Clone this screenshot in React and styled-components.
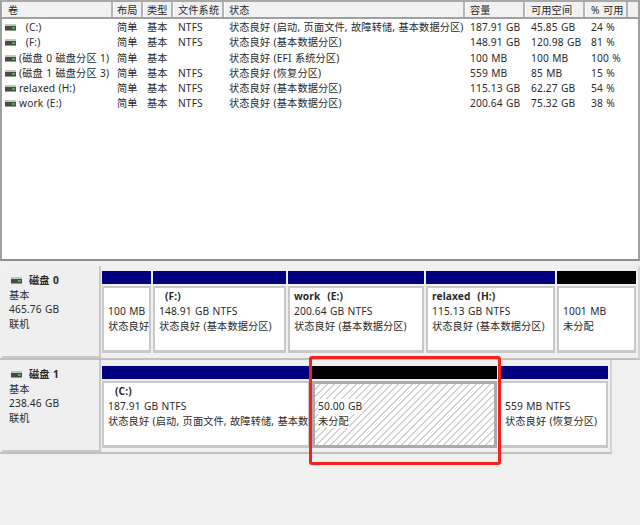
import React from "react";
import styled, { createGlobalStyle } from "styled-components";

const GlobalStyle = createGlobalStyle`
  html, body {
    margin: 0;
    padding: 0;
    background: #f0f0f0;
    overflow: hidden;
  }
  * {
    box-sizing: border-box;
  }
`;

const FONT = `"Noto Sans", "Noto Sans CJK SC", sans-serif`;

const Page = styled.div`
  position: relative;
  width: 640px;
  height: 525px;
  background: #f0f0f0;
  color: #2a2a2a;
  font-family: ${FONT};
  font-size: 10.2px;
  letter-spacing: 0.12px;
  word-spacing: 0.6px;
  overflow: hidden;
`;

const VolumeList = styled.div`
  height: 261px;
  background: #fff;
  border-top: 2px solid #a8a8a8;
  border-left: 2px solid #a0a0a0;
  border-right: 2px solid #a0a0a0;
  border-bottom: 2px solid #8c8c8c;
`;

const HeaderRow = styled.div`
  display: flex;
  height: 17px;
  background: #f1f1f1;
  border-bottom: 2px solid #a0a0a0;
`;

const HeaderCell = styled.div`
  width: ${(p) => p.$w}px;
  flex: none;
  padding-left: ${(p) => p.$pad}px;
  line-height: 16px;
  border-right: 2px solid #b4b4b4;
  border-left: 1px solid #fff;
  white-space: nowrap;
  overflow: hidden;
`;

const Rows = styled.div`
  padding-top: 1px;
`;

const Row = styled.div`
  display: flex;
  height: 15.25px;
  line-height: 15px;
`;

const Cell = styled.div`
  width: ${(p) => p.$w}px;
  flex: none;
  padding-left: ${(p) => p.$pad}px;
  white-space: nowrap;
  overflow: hidden;
`;

const NameCell = styled(Cell)`
  display: flex;
  align-items: center;
  gap: 3px;
`;

const VolumeName = styled.span`
  white-space: pre;
`;

const DiskRow = styled.div`
  display: flex;
  height: 94px;
  width: ${(p) => p.$w}px;
  border-right: 2px solid #d4d4d4;
  border-bottom: 2px solid #c0c0c0;
`;

const DiskInfo = styled.div`
  width: 99px;
  flex: none;
  margin-left: 2px;
  padding: 7px 0 0 7px;
  background: #efefef;
  border-right: 2px solid #c8c8c8;
  border-bottom: 2px solid #c8c8c8;
  line-height: 14.6px;
`;

const DiskTitle = styled.div`
  display: flex;
  align-items: center;
  gap: 7px;
  padding-left: 2px;
  font-weight: 700;
`;

const Partitions = styled.div`
  display: flex;
  gap: 2px;
  padding: ${(p) => p.$top}px 0 0 1px;
`;

const Partition = styled.div`
  display: flex;
  flex-direction: column;
  width: ${(p) => p.$w}px;
  flex: none;
  height: 82px;
`;

const PartitionBar = styled.div`
  height: 13px;
  flex: none;
  background: ${(p) => (p.$free ? "#000" : "#000080")};
`;

const PartitionBody = styled.div`
  flex: 1;
  margin-top: 2px;
  padding: 1px 0 0 4px;
  border: 2px solid #c8c8c8;
  border-bottom-width: 3px;
  background: #fff;
  line-height: 14.7px;
  white-space: nowrap;
  overflow: hidden;
`;

const HatchedBody = styled(PartitionBody)`
  border-color: #ababab;
  border-width: 3px;
  padding: 0 0 0 3px;
  background: repeating-linear-gradient(
    -45deg,
    #d2d2d2 0,
    #d2d2d2 1.4px,
    #fff 1.4px,
    #fff 5px
  );
`;

const PartitionName = styled.div`
  font-weight: 700;
  height: 15px;
  white-space: pre;
  padding-left: ${(p) => p.$indent || 0}px;
`;

const TextLine = styled.div`
  width: fit-content;
  background: ${(p) => (p.$plate ? "#fff" : "transparent")};
`;

const RedFrame = styled.div`
  position: absolute;
  left: 309px;
  top: 356px;
  width: 192px;
  height: 109px;
  border: 3px solid #f4211d;
  border-radius: 3px;
`;

const DiskArea = styled.div`
  padding-top: 5px;
`;

function DriveIcon() {
  return (
    <svg width="11" height="7" viewBox="0 0 11 7" style={{ flex: "none" }}>
      <rect x="0" y="0" width="11" height="2" fill="#c4c4c4" />
      <rect x="0" y="2" width="11" height="4" fill="#4a4a4a" />
      <rect x="7" y="3" width="3" height="2" fill="#3fb54a" />
      <rect x="0" y="6" width="11" height="1" fill="#9a9a9a" />
    </svg>
  );
}

// head = header text inset, pad = row text inset
const columns = [
  { title: "卷", w: 111, head: 5, pad: 3 },
  { title: "布局", w: 30, head: 3, pad: 4 },
  { title: "类型", w: 30, head: 3, pad: 4 },
  { title: "文件系统", w: 51, head: 4, pad: 5 },
  { title: "状态", w: 241, head: 4, pad: 5 },
  { title: "容量", w: 60, head: 4, pad: 5 },
  { title: "可用空间", w: 60, head: 5, pad: 6 },
  { title: "% 可用", w: 43, head: 5, pad: 6 },
];

const volumes = [
  ["  (C:)", "简单", "基本", "NTFS", "状态良好 (启动, 页面文件, 故障转储, 基本数据分区)", "187.91 GB", "45.85 GB", "24 %"],
  ["  (F:)", "简单", "基本", "NTFS", "状态良好 (基本数据分区)", "148.91 GB", "120.98 GB", "81 %"],
  ["(磁盘 0 磁盘分区 1)", "简单", "基本", "", "状态良好 (EFI 系统分区)", "100 MB", "100 MB", "100 %"],
  ["(磁盘 1 磁盘分区 3)", "简单", "基本", "NTFS", "状态良好 (恢复分区)", "559 MB", "85 MB", "15 %"],
  ["relaxed (H:)", "简单", "基本", "NTFS", "状态良好 (基本数据分区)", "115.13 GB", "62.27 GB", "54 %"],
  ["work (E:)", "简单", "基本", "NTFS", "状态良好 (基本数据分区)", "200.64 GB", "75.32 GB", "38 %"],
];

const disks = [
  {
    name: "磁盘 0",
    size: "465.76 GB",
    w: 640,
    top: 5,
    parts: [
      { w: 49, lines: ["100 MB", "状态良好"], blank: true },
      { w: 133, name: "(F:)", indent: 6, lines: ["148.91 GB NTFS", "状态良好 (基本数据分区)"] },
      { w: 136, name: "work  (E:)", lines: ["200.64 GB NTFS", "状态良好 (基本数据分区)"] },
      { w: 129, name: "relaxed  (H:)", lines: ["115.13 GB NTFS", "状态良好 (基本数据分区)"] },
      { w: 79, free: true, lines: ["1001 MB", "未分配"], blank: true },
    ],
  },
  {
    name: "磁盘 1",
    size: "238.46 GB",
    w: 612,
    top: 6,
    parts: [
      { w: 208, name: "(C:)", indent: 7, lines: ["187.91 GB NTFS", "状态良好 (启动, 页面文件, 故障转储, 基本数"] },
      { w: 185, free: true, hatched: true, lines: ["50.00 GB", "未分配"], blank: true },
      { w: 109, lines: ["559 MB NTFS", "状态良好 (恢复分区)"], blank: true },
    ],
  },
];

function PartitionBlock({ part }) {
  const Body = part.hatched ? HatchedBody : PartitionBody;
  return (
    <Partition $w={part.w}>
      <PartitionBar $free={part.free} />
      <Body>
        <PartitionName $indent={part.indent}>{part.blank ? "" : part.name}</PartitionName>
        {part.lines.map((line) => (
          <TextLine key={line} $plate={part.hatched}>
            {line}
          </TextLine>
        ))}
      </Body>
    </Partition>
  );
}

export default function App() {
  return (
    <Page>
      <GlobalStyle />
      <VolumeList>
        <HeaderRow>
          {columns.map((col) => (
            <HeaderCell key={col.title} $w={col.w} $pad={col.head}>
              {col.title}
            </HeaderCell>
          ))}
        </HeaderRow>
        <Rows>
          {volumes.map((vol) => (
            <Row key={vol[0]}>
              {vol.map((value, i) =>
                i === 0 ? (
                  <NameCell key={i} $w={columns[i].w} $pad={columns[i].pad}>
                    <DriveIcon />
                    <VolumeName>{value}</VolumeName>
                  </NameCell>
                ) : (
                  <Cell key={i} $w={columns[i].w} $pad={columns[i].pad}>
                    {value}
                  </Cell>
                )
              )}
            </Row>
          ))}
        </Rows>
      </VolumeList>
      <DiskArea>
        {disks.map((disk) => (
          <DiskRow key={disk.name} $w={disk.w}>
            <DiskInfo>
              <DiskTitle>
                <DriveIcon />
                {disk.name}
              </DiskTitle>
              <div>基本</div>
              <div>{disk.size}</div>
              <div>联机</div>
            </DiskInfo>
            <Partitions $top={disk.top}>
              {disk.parts.map((part) => (
                <PartitionBlock key={part.lines[0]} part={part} />
              ))}
            </Partitions>
          </DiskRow>
        ))}
      </DiskArea>
      <RedFrame />
    </Page>
  );
}
